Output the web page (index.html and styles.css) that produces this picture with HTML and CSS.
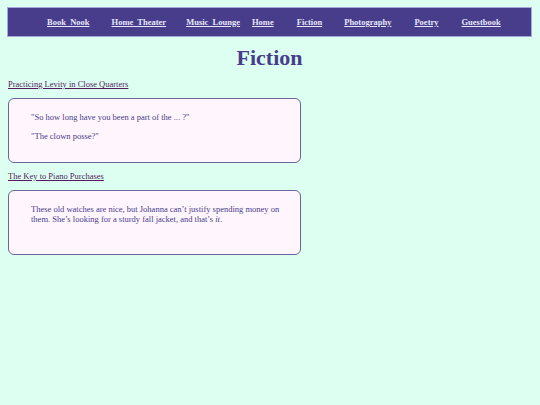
FILE: index.html
```html
<!DOCTYPE html>
<html>
<head>
<meta charset="utf-8">
<link rel="stylesheet" href="styles.css">
</head>
<body>
<nav class="nav">
  <a href="#">Book&nbsp; Nook</a>
  <a href="#" class="narrow">Home&nbsp; Theater</a>
  <a href="#" class="tight">Music&nbsp; Lounge</a>
  <a href="#" class="wide">Home</a>
  <a href="#">Fiction</a>
  <a href="#" class="wide">Photography</a>
  <a href="#" class="wide">Poetry</a>
  <a href="#">Guestbook</a>
</nav>
<h1 class="title">Fiction</h1>
<a class="story-link" href="#">Practicing Levity in Close Quarters</a>
<div class="story">
  <p>"So how long have you been a part of the ... ?"</p>
  <p>"The clown posse?"</p>
</div>
<a class="story-link" href="#">The Key to Piano Purchases</a>
<div class="story">
  <p>These old watches are nice, but Johanna can’t justify spending money on them. She’s looking for a sturdy fall jacket, and that’s <em>it</em>.</p>
</div>
</body>
</html>
```
FILE: styles.css
```css
body {
  margin: 7px 8px 8px 7px;
  background: #dcfff2;
  font-family: "Liberation Serif", serif;
  font-size: 8.5px;
}
.nav {
  display: flex;
  align-items: center;
  height: 28px;
  padding-left: 39px;
  gap: 22px;
  background: #483d8b;
  border: 1px solid #a9a6dc;
}
.nav a {
  flex-shrink: 0;
  white-space: nowrap;
  color: #e6e6fa;
  font-weight: bold;
  font-size: 8.5px;
}
.nav a.narrow {
  margin-right: -2px;
}
.nav a.tight {
  margin-right: -10px;
}
.nav a.wide {
  margin-right: 1px;
}
.title {
  margin: 8px 0 8px;
  text-align: center;
  font-family: "Liberation Serif", serif;
  font-size: 22px;
  font-weight: bold;
  color: #483d8b;
}
.story-link {
  display: inline-block;
  margin-left: 1px;
  color: #551a5b;
}
.story {
  box-sizing: border-box;
  width: 293px;
  min-height: 65px;
  margin: 9px 0 8px 1px;
  padding: 4px 20px 4px 22px;
  background: #fff6fd;
  border: 1px solid #6b6699;
  border-radius: 6px;
  color: #483d8b;
}
.story p {
  margin: 9px 0;
}
```
